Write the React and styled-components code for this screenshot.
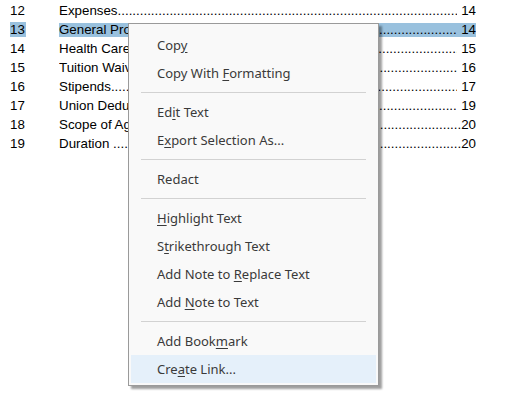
import React from 'react'
import styled, { createGlobalStyle } from 'styled-components';

const GlobalStyle = createGlobalStyle`
  html, body {
    margin: 0;
    padding: 0;
    background: #fff;
  }
`;

const Page = styled.div`
  position: relative;
  width: 505px;
  height: 400px;
  overflow: hidden;
  background: #fff;
  padding-top: 3px;
  box-sizing: border-box;
`;

const Toc = styled.div`
  display: flex;
  flex-direction: column;
  width: 467px;
  margin-left: 9px;
  font-family: "Liberation Sans", Arial, sans-serif;
  font-size: 13.33px;
  color: #000;
`;

const TocRow = styled.div`
  display: grid;
  grid-template-columns: 50px 1fr;
  height: 19px;
  align-items: start;
`;

const Num = styled.div`
  padding-left: 1px;
  line-height: 14px;
  margin-top: 1px;
  & span {
    background: ${p => (p.$sel ? '#99c1de' : 'transparent')};
    padding-right: 1px;
  }
`;

const Entry = styled.div`
  display: flex;
  line-height: 14px;
  margin-top: 1px;
  white-space: nowrap;
  overflow: hidden;
  background: ${p => (p.$sel ? '#99c1de' : 'transparent')};
`;

// dot leader between the title and the page number
const Leader = styled.span`
  flex: 1;
  min-width: 0;
  overflow: hidden;

  &::before {
    content: '${'.'.repeat(140)}';
  }
`;

const PageNo = styled.span`
  padding-left: ${p => (p.$tight ? '0' : '4px')};
`;

const Menu = styled.div`
  position: absolute;
  left: 128px;
  top: 23px;
  width: 245px;
  padding: 7px 2px 2px 2px;
  background: #f9f9f9;
  border: 1px solid #9a9a9a;
  box-shadow: 3px 3px 2px rgba(0, 0, 0, 0.38);
  font-family: "Noto Sans", "Open Sans", sans-serif;
  font-size: 13px;
  color: #3a3a3a;
`;

const Item = styled.div`
  display: flex;
  align-items: center;
  height: 28px;
  padding-left: 26px;
  background: ${p => (p.$hover ? '#e5f0fa' : 'transparent')};

  & u {
    text-decoration-thickness: 1px;
    text-underline-offset: 2px;
  }
`;

const Sep = styled.div`
  height: 11px;
  display: flex;
  align-items: center;
  padding: 0 10px;

  &::after {
    content: '';
    flex: 1;
    height: 1px;
    background: #d2d2d2;
  }
`;

const rows = [
  { n: '12', t: 'Expenses', p: '14' },
  { n: '13', t: 'General Provisions', p: '14', sel: true },
  { n: '14', t: 'Health Care', p: '15' },
  { n: '15', t: 'Tuition Waivers', p: '16' },
  { n: '16', t: 'Stipends', p: '17' },
  { n: '17', t: 'Union Deductions', p: '19' },
  { n: '18', t: 'Scope of Agreement', p: '20', tight: true },
  { n: '19', t: 'Duration\u00a0', p: '20', tight: true },
];

const menu = [
  <>Cop<u>y</u></>,
  <>Copy With <u>F</u>ormatting</>,
  '-',
  <>Ed<u>i</u>t Text</>,
  <>E<u>x</u>port Selection As...</>,
  '-',
  <>Redact</>,
  '-',
  <><u>H</u>ighlight Text</>,
  <>S<u>t</u>rikethrough Text</>,
  <>Add Note to <u>R</u>eplace Text</>,
  <>Add <u>N</u>ote to Text</>,
  '-',
  <>Add Book<u>m</u>ark</>,
  <>Cre<u>a</u>te Link...</>,
];

const App = () => {
  return (
    <Page>
      <GlobalStyle />
      <Toc>
        {rows.map(r => (
          <TocRow key={r.n}>
            <Num $sel={r.sel}><span>{r.n}</span></Num>
            <Entry $sel={r.sel}>
              <span>{r.t}</span>
              <Leader />
              <PageNo $tight={r.tight}>{r.p}</PageNo>
            </Entry>
          </TocRow>
        ))}
      </Toc>

      {/* context menu */}
      <Menu>
        {menu.map((m, i) =>
          m === '-' ? (
            <Sep key={i} />
          ) : (
            <Item key={i} $hover={i === menu.length - 1}><span>{m}</span></Item>
          )
        )}
      </Menu>
    </Page>
  )
}

export default App
